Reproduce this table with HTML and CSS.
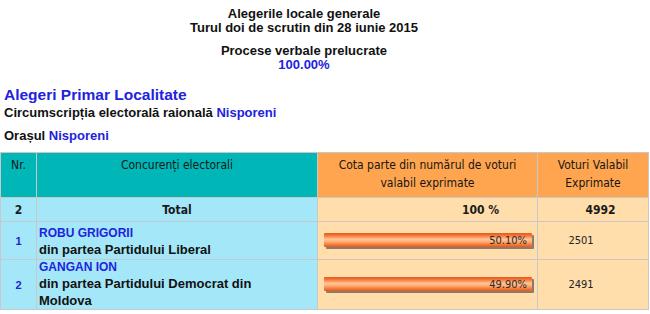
FILE: index.html
```html
<!DOCTYPE html>
<html lang="ro">
<head>
<meta charset="utf-8">
<title>Alegeri Primar Localitate</title>
<link rel="stylesheet" href="styles.css">
</head>
<body>
<div class="top">
  <p class="top-line">Alegerile locale generale<br>Turul doi de scrutin din 28 iunie 2015</p>
  <p class="top-line second">Procese verbale prelucrate<br><span class="blue">100.00%</span></p>
</div>
<div class="loc">
  <h2 class="loc-title">Alegeri Primar Localitate</h2>
  <div class="loc-line">Circumscripția electorală raională <span class="blue">Nisporeni</span></div>
  <div class="loc-line city">Orașul <span class="blue">Nisporeni</span></div>
</div>
<table class="res">
  <tr class="head-row">
    <th class="c-nr">Nr.</th>
    <th class="c-name">Concurenți electorali</th>
    <th class="c-cota">Cota parte din numărul de voturi<br>valabil exprimate</th>
    <th class="c-vot">Voturi Valabil<br>Exprimate</th>
  </tr>
  <tr class="total-row">
    <td class="c-nr b">2</td>
    <td class="c-name b">Total</td>
    <td class="c-cota b total-cota">100 %</td>
    <td class="c-vot b total-vot">4992</td>
  </tr>
  <tr class="data-row r1">
    <td class="c-nr num">1</td>
    <td class="c-name cand"><div class="cand-name">ROBU GRIGORII</div><div class="cand-party">din partea Partidului Liberal</div></td>
    <td class="c-cota bar-cell"><div class="bar"><span class="bar-label">50.10%</span></div></td>
    <td class="c-vot votes">2501</td>
  </tr>
  <tr class="data-row r2">
    <td class="c-nr num">2</td>
    <td class="c-name cand"><div class="cand-name">GANGAN ION</div><div class="cand-party">din partea Partidului Democrat din<br>Moldova</div></td>
    <td class="c-cota bar-cell"><div class="bar"><span class="bar-label">49.90%</span></div></td>
    <td class="c-vot votes">2491</td>
  </tr>
</table>
</body>
</html>
```
FILE: styles.css
```css
html, body {
  margin: 0;
  padding: 0;
  background: #ffffff;
}
body {
  font-family: "Liberation Sans", Arial, sans-serif;
  color: #111111;
}
.blue {
  color: #2222dd;
}
.top {
  width: 608px;
  text-align: center;
  padding-top: 7px;
}
.top-line {
  margin: 0;
  font-size: 13px;
  font-weight: bold;
  line-height: 14px;
}
.top-line.second {
  margin-top: 9px;
}
.loc {
  padding-left: 4px;
  padding-top: 14px;
}
.loc-title {
  margin: 0;
  font-size: 15.5px;
  line-height: 18px;
  font-weight: bold;
  color: #2222dd;
}
.loc-line {
  font-size: 13px;
  font-weight: bold;
  line-height: 18px;
}
.loc-line.city {
  margin-top: 5px;
}
.res {
  margin-top: 7px;
  border-collapse: collapse;
  width: 649px;
  table-layout: fixed;
  font-family: "DejaVu Sans Condensed", "DejaVu Sans", sans-serif;
  font-size: 12px;
}
.res th, .res td {
  border: 1px solid #c8c8c8;
  padding: 0;
}
.c-nr { width: 35px; }
.c-name { width: 280px; }
.c-cota { width: 219px; }
.c-vot { width: auto; }
.res th {
  font-weight: normal;
  color: #161616;
  vertical-align: top;
  line-height: 18px;
  padding-top: 3px;
  text-align: center;
}
.head-row { height: 45px; }
.total-row { height: 24px; }
.r1 { height: 38px; }
.r2 { height: 50px; }
.res th.c-nr, .res th.c-name {
  background: #00b6b6;
}
.res th.c-cota, .res th.c-vot {
  background: #ffa54f;
}
.res td.c-nr, .res td.c-name {
  background: #a4e7f8;
}
.res td.c-cota, .res td.c-vot {
  background: #ffdeab;
}
.total-row td {
  text-align: center;
  color: #1a1a1a;
}
.b { font-weight: bold; }
.res td.total-cota { padding-left: 106px; }
.res td.total-vot { padding-left: 15px; }
.num {
  text-align: center;
  font-family: "Liberation Sans", Arial, sans-serif;
  font-weight: bold;
  font-size: 11px;
  color: #2222dd;
}
.res td.cand {
  padding: 0 0 0 2px;
  vertical-align: top;
  font-family: "Liberation Sans", Arial, sans-serif;
  font-weight: bold;
}
.res tr.r1 td.cand {
  padding-top: 4px;
}
.cand-name {
  font-size: 12px;
  line-height: 15px;
  color: #2222dd;
}
.cand-party {
  font-size: 13px;
  line-height: 17px;
  color: #111111;
}
.res td.bar-cell {
  padding: 0 5px 2px 6px;
}
.bar {
  height: 14px;
  border-radius: 1px;
  background: linear-gradient(to bottom, #e2581c 0%, #f77a3a 20%, #ffc59a 45%, #ffb27c 60%, #f5762f 85%, #e45a1c 100%);
  box-shadow: 2px 2px 0 #8a7a70;
  text-align: right;
  padding-right: 5px;
}
.bar-label {
  font-size: 11px;
  line-height: 14px;
  color: #2a2a2a;
}
.res td.votes {
  text-align: center;
  padding-right: 24px;
  font-size: 11px;
  color: #222222;
}
```
